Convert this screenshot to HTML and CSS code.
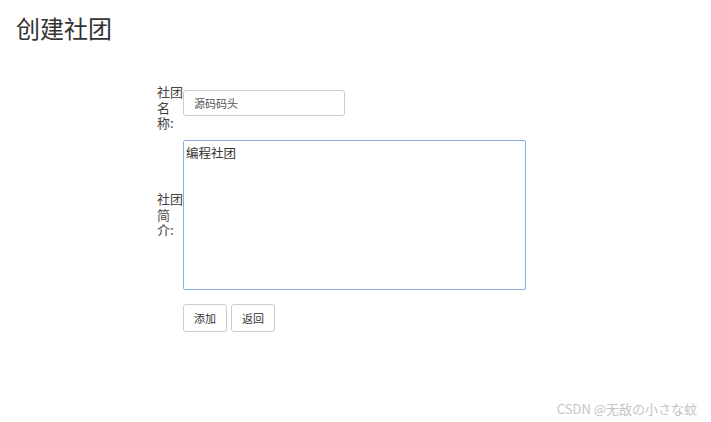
FILE: index.html
```html
<!DOCTYPE html>
<html>
<head>
    <title>创建社团</title>
    <link rel="stylesheet" href="styles.css">
</head>
<body>
    <h1 class="title">创建社团</h1>

    <form class="club-form">
        <div class="form-row row-name">
            <label class="form-label" for="name">社团名称:</label>
            <input type="text" id="name" class="text-input" value="源码码头">
        </div>

        <div class="form-row row-intro">
            <label class="form-label" for="intro">社团简介:</label>
            <textarea id="intro" class="text-area">编程社团</textarea>
        </div>

        <div class="form-actions">
            <button type="button" class="btn">添加</button>
            <button type="button" class="btn">返回</button>
        </div>
    </form>

    <div class="watermark">CSDN @无敌の小さな蚊</div>
</body>
</html>
```

FILE: styles.css
```css
body { margin: 0; font-family: "Noto Sans CJK SC", "Liberation Sans", sans-serif; color: #333; background: #fff; height: 422px; position: relative; overflow: hidden; }
.title { margin: 0; padding: 12px 0 0 16px; font-size: 24px; font-weight: 400; line-height: 32px; color: #333; }
.club-form { margin: 35px 0 0 157px; }
.form-row { display: flex; align-items: center; }
.form-label { width: 26px; font-size: 13px; line-height: 15.5px; color: #444; word-break: break-all; }
.row-name .form-label { margin-top: 5px; }
.text-input { width: 162px; height: 26px; box-sizing: border-box; margin-bottom: 4px; padding: 0 10px; border: 1px solid #ccc; border-radius: 3px; font-family: inherit; font-size: 11px; color: #555; outline: none; }
.row-intro { margin-top: 9px; }
.text-area { width: 343px; height: 150px; box-sizing: border-box; margin: 0; padding: 3px 2px; border: 1px solid #88aee6; border-radius: 2px; resize: none; font-family: inherit; font-size: 12.5px; line-height: 17px; color: #333; outline: none; }
.form-actions { display: flex; gap: 4px; margin: 14px 0 0 26px; }
.btn { height: 28px; padding: 0 10px; background: #fff; border: 1px solid #ccc; border-radius: 3px; font-family: inherit; font-size: 11px; color: #333; }
.watermark { position: absolute; right: 14px; bottom: 4px; font-size: 13px; color: #c4c4c4; }
```
